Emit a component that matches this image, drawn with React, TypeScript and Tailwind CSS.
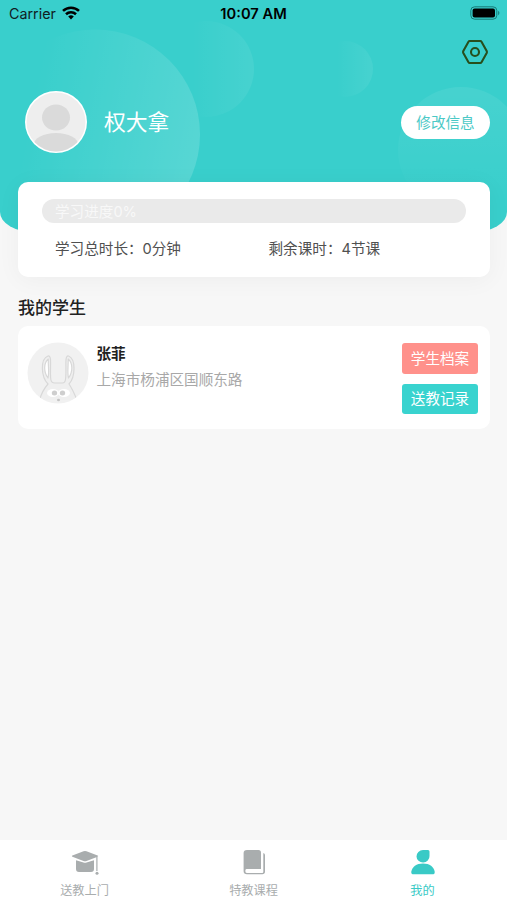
import type { ReactNode } from "react";

const BASE = "font-['Inter','Noto_Sans_CJK_SC',sans-serif]";

function StatusBar() {
  return (
    <div className="grid h-7 grid-cols-3 items-center pl-[9px] pr-[7px] text-[14px] leading-7 text-[#10201f]">
      <div className="flex items-center gap-[6px]">
        <span className="text-[14.3px]">Carrier</span>
        <svg className="-mt-[2px]" width="18" height="14" viewBox="0 0 18 14" fill="none" stroke="#000" strokeWidth="2.6">
          <path d="M1 4.900a11.600 11.600 0 0 1 16 0" />
          <path d="M4 8.300a7.200 7.200 0 0 1 10 0" />
          <path d="M9 13.400 6.200 10.600a4 4 0 0 1 5.600 0Z" fill="#000" stroke="none" />
        </svg>
      </div>
      <span className="-ml-[2px] text-center text-[14.7px] font-semibold whitespace-nowrap text-black">10:07 AM</span>
      <svg className="-mt-[2px] justify-self-end" width="30" height="14" viewBox="0 0 30 14">
        <rect x="0.800" y="0.800" width="26" height="12.400" rx="3.800" fill="none" stroke="#167b78" strokeWidth="1" />
        <rect x="2.600" y="2.500" width="22.400" height="9" rx="2" fill="#000" />
        <path d="M28.200 4.800c1.600.7 1.600 3.700 0 4.400Z" fill="#167b78" />
      </svg>
    </div>
  );
}

function HeaderBackdrop() {
  return (
    <svg className="absolute inset-0" width="507" height="232" viewBox="0 0 507 232">
      <defs>
        <linearGradient id="fade" x1="0" y1="0.300" x2="1" y2="0.500">
          <stop offset="0.200" stopColor="#fff" stopOpacity="0" />
          <stop offset="1" stopColor="#fff" stopOpacity="0.150" />
        </linearGradient>
        <linearGradient id="soft" x1="0" y1="0" x2="1" y2="0">
          <stop offset="0.350" stopColor="#fff" stopOpacity="0" />
          <stop offset="1" stopColor="#fff" stopOpacity="0.070" />
        </linearGradient>
        <linearGradient id="down" x1="0" y1="0" x2="0" y2="1">
          <stop offset="0" stopColor="#fff" stopOpacity="0.070" />
          <stop offset="0.900" stopColor="#fff" stopOpacity="0" />
        </linearGradient>
      </defs>
      <circle cx="95" cy="134.500" r="105" fill="url(#fade)" />
      <circle cx="206" cy="69" r="48" fill="url(#soft)" />
      <circle cx="345" cy="69" r="28" fill="url(#soft)" />
      <circle cx="461" cy="150" r="63" fill="url(#down)" />
    </svg>
  );
}

function Header() {
  return (
    <header className="relative h-[232px] overflow-hidden bg-[#39cfcc] [border-radius:0_0_34px_34px/0_0_20px_20px]">
      <HeaderBackdrop />
      <div className="relative">
        <StatusBar />
        <div className="flex justify-end pt-[11px] pr-[18px]">
          <svg width="28" height="26" viewBox="0 0 28 26" fill="none" stroke="#274f1d" strokeWidth="2.100" strokeLinejoin="round">
            <path d="M8.700 2h10.600q.8 0 1.200.7l5.200 9.300q.5 1 0 2l-5.200 9.300q-.4.700-1.200.700H8.700q-.8 0-1.200-.7L2.300 14q-.5-1 0-2L7.500 2.700q.4-.7 1.200-.7Z" />
            <circle cx="14" cy="13" r="4" />
          </svg>
        </div>
        <div className="flex items-center pt-[26px] pr-[17px] pl-[25px]">
          <svg width="62" height="62" viewBox="0 0 62 62">
            <clipPath id="face"><circle cx="31" cy="31" r="29.500" /></clipPath>
            <circle cx="31" cy="31" r="31" fill="#fff" />
            <circle cx="31" cy="31" r="29.500" fill="#eee" />
            <g clipPath="url(#face)" fill="#dadada">
              <ellipse cx="31" cy="26.500" rx="14" ry="13" />
              <ellipse cx="31" cy="54" rx="22.500" ry="12" />
            </g>
          </svg>
          <h1 className="ml-[17px] text-[21.8px] leading-8 text-white">权大拿</h1>
          <button className="ml-auto h-[33px] w-[89px] rounded-full bg-white pt-px text-[14.6px] leading-[32px] text-[#4bc9c6]">
            修改信息
          </button>
        </div>
      </div>
    </header>
  );
}

function ProgressCard() {
  return (
    <section className="relative mr-[17px] ml-[18px] -mt-[50.5px] h-[95px] rounded-[10px] bg-white px-6 pt-[17px] text-[14.6px] text-[#505050] shadow-[0_3px_24px_rgba(0,0,0,0.045)]">
      <div className="h-[24.5px] rounded-full bg-[#eaeaea] pt-px pl-[13px] leading-[24px] text-[#f8f8f8]">学习进度0%</div>
      <div className="mt-[15px] flex pl-[13px] leading-[22px]">
        <span className="w-[213.5px]">学习总时长：0分钟</span>
        <span>剩余课时：4节课</span>
      </div>
    </section>
  );
}

function RabbitAvatar() {
  return (
    <svg width="62" height="62" viewBox="0 0 62 62" fill="none">
      <clipPath id="rabbit"><circle cx="31" cy="31" r="30.500" /></clipPath>
      <circle cx="31" cy="31" r="30.500" fill="#f1f1f1" />
      <g clipPath="url(#rabbit)" stroke="#d8d8d8" strokeWidth="1.200" strokeLinejoin="round">
        <path
          d="M12.500 58C14.500 51 17.500 46 21 42C14 35 13 17 21 14C25.500 13 22.500 27 23.800 37.500Q24.500 41 27.500 41H35.500Q38 41 38.500 37.500C40 27 37 13 41.500 14C49 17 48.500 35 42 42C45.500 47 47.500 52 50 58"
          fill="#efefef"
        />
        <path d="M21.300 17C16.500 21 16.500 30 21 36C22.500 30 21 24 21.300 17ZM41.200 17C46 21 46 30 41.500 36C40 30 41.500 24 41.200 17Z" fill="#fff" />
        <g stroke="none">
          <ellipse cx="26" cy="51" rx="6" ry="4" fill="#fff" />
          <ellipse cx="37" cy="51" rx="6" ry="4" fill="#fff" />
          <ellipse cx="27.500" cy="51" rx="2.700" ry="2.500" fill="#cecece" />
          <ellipse cx="35.500" cy="51" rx="2.700" ry="2.500" fill="#cecece" />
          <ellipse cx="31.500" cy="58" rx="1.500" ry="1.200" fill="#c4c4c4" />
        </g>
      </g>
    </svg>
  );
}

function StudentCard() {
  return (
    <article className="mr-[17px] ml-[18px] flex h-[103px] rounded-[10px] bg-white pr-3 pl-[9px]">
      <div className="pt-[16px]">
        <RabbitAvatar />
      </div>
      <div className="ml-[7.5px] pt-[17px] text-[14.6px] leading-[22px]">
        <h3 className="font-bold text-[#222]">张菲</h3>
        <p className="mt-[4px] text-[#a8a8a8]">上海市杨浦区国顺东路</p>
      </div>
      <div className="ml-auto flex w-[76px] flex-col gap-[9.5px] pt-[17px] text-[14.6px] leading-[30px] text-white">
        <button className="h-[31px] rounded-[3px] bg-[#ff918b] pt-px">学生档案</button>
        <button className="h-[30.5px] rounded-[3px] bg-[#39d3cf]">送教记录</button>
      </div>
    </article>
  );
}

function Tab({ label, active, children }: { label: string; active?: boolean; children: ReactNode }) {
  return (
    <div className={`flex flex-1 flex-col items-center pt-[9px] ${active ? "text-[#39cac6]" : "text-[#a9adae]"}`}>
      <svg className="shrink-0" width="28" height="27" viewBox="0 0 28 27" fill="currentColor">
        {children}
      </svg>
      <span className="mt-[6px] text-[12.2px] leading-[18px]">{label}</span>
    </div>
  );
}

function TabBar() {
  return (
    <nav className="flex h-[60px] bg-white">
      <Tab label="送教上门">
        <path d="M1.400 6.500 12.500 2.300q1.500-.5 3 0L26.600 6.500q1.200.6 0 1.200L15.500 12q-1.500.5-3 0L1.400 7.700q-1.200-.6 0-1.200Z" />
        <path d="M5 11.200 12.500 13.600q1.500.4 3 0L23 11.200V20q0 3-3 3H8q-3 0-3-3Z" />
        <path d="M25.300 8h1.200v14h-1.200Z" />
        <circle cx="26" cy="24.300" r="1.500" />
      </Tab>
      <Tab label="特教课程">
        <path d="M7 1H18.500Q21 1 21 3.500V20H6.500Q5.300 20 5.300 22T6.800 24H22.200Q23.300 24 23.300 22.800V4Q25 4.500 25 6V22.500Q25 25.300 22.300 25.300H7Q3.600 25.300 3.600 22.300V4Q3.600 1 7 1Z" />
      </Tab>
      <Tab label="我的" active>
        <path d="M14 1h5q1.500 0 1.500 1.500V7A6.500 6.300 0 1 1 14 1Z" />
        <path d="M14 14.500C7.500 14.500 3 18 2.300 22.700Q2 25.300 4.700 25.300H23.300Q26 25.300 25.700 22.700C25 18 20.500 14.500 14 14.500Z" />
      </Tab>
    </nav>
  );
}

export default function App() {
  return (
    <div className={`flex h-[900px] w-[507px] flex-col overflow-hidden bg-[#f7f7f7] ${BASE}`}>
      <Header />
      <main className="flex-1">
        <ProgressCard />
        <h2 className="mt-[19px] mb-[6.5px] ml-[18px] text-[17px] leading-6 font-medium text-[#222]">我的学生</h2>
        <StudentCard />
      </main>
      <TabBar />
    </div>
  );
}
